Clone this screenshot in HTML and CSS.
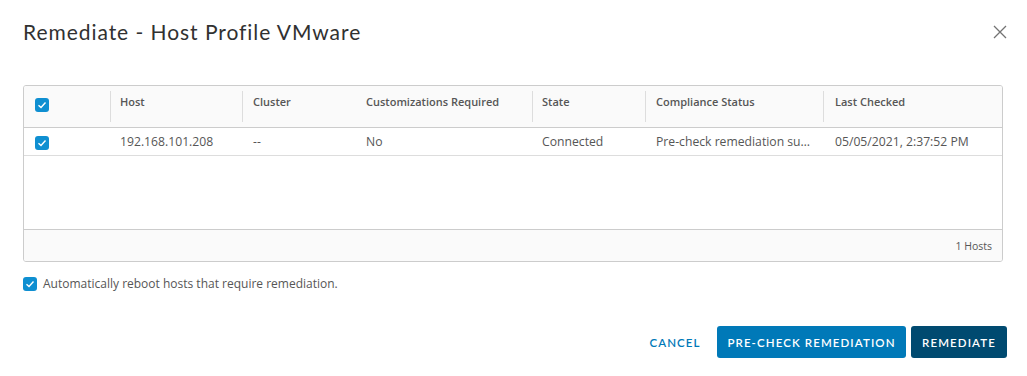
FILE: index.html
```html
<!DOCTYPE html>
<html>
<head>
<meta charset="utf-8">
<link rel="stylesheet" href="styles.css">
</head>
<body>
<div class="modal">
  <div class="modal-header">
    <h1 class="title">Remediate - Host Profile VMware</h1>
    <button class="close" aria-label="Close">
      <svg width="14" height="14" viewBox="0 0 14 14"><path d="M1 1L13 13M13 1L1 13" stroke="#737373" stroke-width="1.3" fill="none"/></svg>
    </button>
  </div>
  <div class="grid">
    <div class="row head">
      <div class="cell chk"><span class="cb"><svg width="10" height="8" viewBox="0 0 10 8"><path d="M1.5 4.2L4 6.5L8.5 1.5" stroke="#fff" stroke-width="1.4" fill="none"/></svg></span></div>
      <div class="cell c-host sep">Host</div>
      <div class="cell c-cluster sep">Cluster</div>
      <div class="cell c-cust">Customizations Required</div>
      <div class="cell c-state sep">State</div>
      <div class="cell c-comp sep">Compliance Status</div>
      <div class="cell c-last sep">Last Checked</div>
    </div>
    <div class="row data">
      <div class="cell chk"><span class="cb"><svg width="10" height="8" viewBox="0 0 10 8"><path d="M1.5 4.2L4 6.5L8.5 1.5" stroke="#fff" stroke-width="1.4" fill="none"/></svg></span></div>
      <div class="cell c-host">192.168.101.208</div>
      <div class="cell c-cluster">--</div>
      <div class="cell c-cust">No</div>
      <div class="cell c-state">Connected</div>
      <div class="cell c-comp"><span class="ell">Pre-check remediation succeeded</span></div>
      <div class="cell c-last">05/05/2021, 2:37:52 PM</div>
    </div>
    <div class="empty"></div>
    <div class="footer">1 Hosts</div>
  </div>
  <label class="reboot"><span class="cb"><svg width="10" height="8" viewBox="0 0 10 8"><path d="M1.5 4.2L4 6.5L8.5 1.5" stroke="#fff" stroke-width="1.4" fill="none"/></svg></span><span>Automatically reboot hosts that require remediation.</span></label>
  <div class="actions">
    <button class="btn link">CANCEL</button>
    <button class="btn primary">PRE-CHECK REMEDIATION</button>
    <button class="btn dark">REMEDIATE</button>
  </div>
</div>
</body>
</html>
```

FILE: styles.css
```css
* { box-sizing: border-box; }
body {
  margin: 0;
  background: #fff;
  font-family: "Open Sans", "Liberation Sans", sans-serif;
  color: #565656;
}
.modal {
  width: 1027px;
  height: 376px;
  padding: 0 20px 0 23px;
  display: flex;
  flex-direction: column;
}
.modal-header {
  display: flex;
  justify-content: space-between;
  align-items: center;
  height: 63px;
}
.title {
  margin: 0;
  font-family: "Lato", sans-serif;
  font-weight: 400;
  font-size: 21px;
  letter-spacing: 0.95px;
  color: #313131;
}
.close {
  border: 0;
  background: none;
  padding: 0;
  width: 14px;
  height: 14px;
  display: flex;
}
.grid {
  margin-top: 22px;
  width: 980px;
  border: 1px solid #cccccc;
  border-radius: 3px;
  display: flex;
  flex-direction: column;
  overflow: hidden;
}
.row { display: flex; }
.head {
  height: 42px;
  background: #fafafa;
  border-bottom: 1px solid #cccccc;
  font-size: 11px;
  font-weight: 600;
  color: #565656;
}
.head .cell { padding-top: 8px; }
.cell {
  padding-left: 10px;
  position: relative;
  white-space: nowrap;
  overflow: hidden;
}
.sep::before {
  content: "";
  position: absolute;
  left: 0;
  top: 5px;
  height: 31px;
  width: 1px;
  background: #dddddd;
}
.chk { width: 86px; padding-left: 11px; }
.c-host { width: 132px; }
.c-cluster { width: 113px; padding-left: 11px; }
.c-cust { width: 177px; padding-left: 11px; }
.c-state { width: 113px; }
.c-comp { width: 178px; padding-left: 11px; }
.c-last { flex: 1; padding-left: 12px; }
.data {
  height: 28px;
  align-items: center;
  border-bottom: 1px solid #dddddd;
  font-size: 12.2px;
  color: #565656;
}
.ell {
  display: block;
  width: 157px;
  overflow: hidden;
  text-overflow: ellipsis;
}
.cb {
  display: inline-flex;
  align-items: center;
  justify-content: center;
  width: 14px;
  height: 14px;
  border-radius: 3px;
  background: #0f8fd1;
  vertical-align: middle;
  flex: none;
}
.head .chk { padding-top: 10px; }
.empty { height: 73px; }
.footer {
  height: 32px;
  background: #fafafa;
  border-top: 1px solid #cccccc;
  font-size: 10.5px;
  color: #565656;
  display: flex;
  align-items: center;
  justify-content: flex-end;
  padding-right: 10px;
}
.reboot {
  margin-top: 13px;
  display: flex;
  align-items: center;
  gap: 6px;
  font-size: 12px;
  color: #565656;
}
.actions {
  margin-top: 34px;
  display: flex;
  justify-content: flex-end;
  gap: 5px;
}
.btn {
  height: 32px;
  border: 0;
  border-radius: 3px;
  font-family: "Lato", sans-serif;
  font-weight: 600;
  font-size: 11.5px;
  letter-spacing: 1.1px;
  padding: 0;
  color: #fff;
  white-space: nowrap;
}
.link { background: none; color: #0079b8; width: 62px; margin-right: 6px; }
.primary { background: #0079b8; width: 189px; }
.dark { background: #004a70; width: 96px; }
```
